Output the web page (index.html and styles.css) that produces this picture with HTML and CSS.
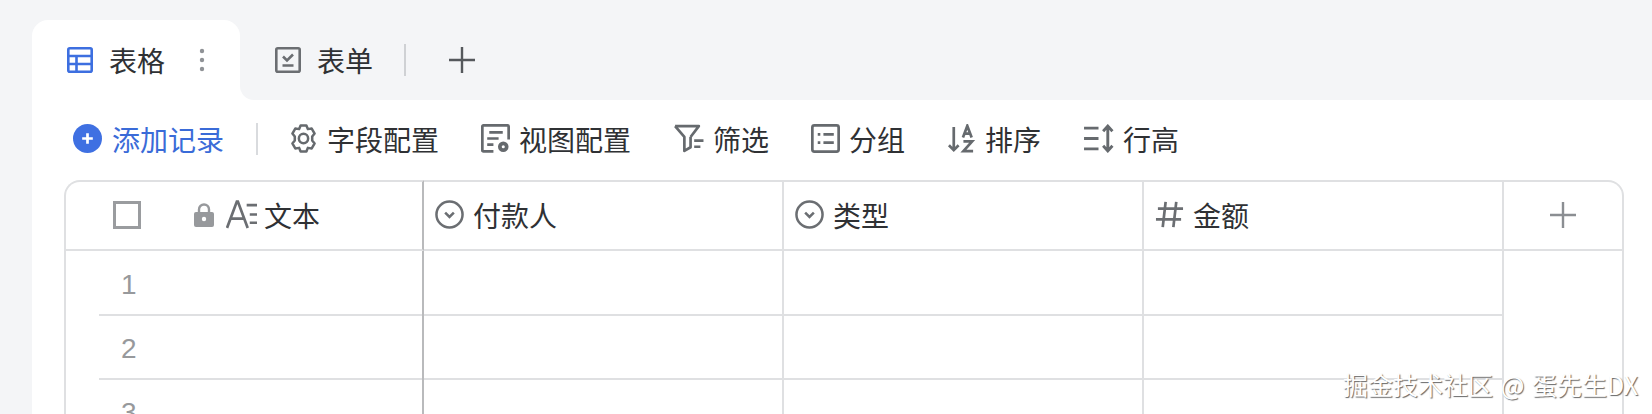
FILE: index.html
```html
<!DOCTYPE html>
<html lang="zh-CN">
<head>
    <meta charset="UTF-8">
    <meta name="viewport" content="width=device-width, initial-scale=1.0">
    <title>表格</title>
    <link rel="stylesheet" href="styles.css">
</head>
<body>

    <div class="view">
        <!-- tabs -->
        <div class="tabbar">
            <div class="tab-active">
                <svg class="icon" viewBox="0 0 26 26" fill="none" stroke="#3d6fe0" stroke-width="2.6"><rect x="1.3" y="1.3" width="23.4" height="23.4" rx="1.5"/><path d="M1.3 9h23.4M1.3 17h23.4M9.500 9v16"/></svg>
                <span class="tab-label">表格</span>
                <svg class="tab-dots" viewBox="0 0 6 24" fill="#8f9296"><circle cx="3" cy="3" r="2.2"/><circle cx="3" cy="12" r="2.2"/><circle cx="3" cy="21" r="2.2"/></svg>
            </div>
            <div class="tab-rest">
                <svg class="icon" viewBox="0 0 26 26" fill="none" stroke="#6b6e72" stroke-width="2.6"><rect x="1.3" y="1.3" width="23.4" height="23.4" rx="1.5"/><path d="M8 9.500l4 4 6-6M7.500 18.500h11"/></svg>
                <span class="tab-label">表单</span>
                <i class="tab-sep"></i>
                <svg class="icon" viewBox="0 0 26 26" fill="none" stroke="#55585c" stroke-width="2.4"><path d="M0 13h26M13 0v26"/></svg>
            </div>
        </div>

        <!-- toolbar -->
        <div class="toolbar">
            <div class="tool tool-add">
                <svg class="icon-lg" viewBox="0 0 30 30"><circle cx="15" cy="15" r="15" fill="#3f70e2"/><path d="M9.500 15h11M15 9.500v11" stroke="#fff" stroke-width="2.8" fill="none"/></svg>
                <span>添加记录</span>
            </div>
            <i class="tool-sep"></i>
            <div class="tool">
                <svg class="icon-lg" viewBox="0 0 28 30" fill="none" stroke="#666a6e" stroke-width="2.6"><path d="M11 1.500h6l1.500 3.800 4-.6 3 5.200-2.500 3.100v4l2.500 3.100-3 5.200-4-.6-1.500 3.800h-6l-1.500-3.800-4 .6-3-5.200 2.500-3.100v-4L2.500 9.900l3-5.200 4 .6z" stroke-linejoin="round"/><circle cx="14" cy="15" r="4.800"/></svg>
                <span>字段配置</span>
            </div>
            <div class="tool">
                <svg class="icon-lg" viewBox="0 0 28 28" fill="none" stroke="#666a6e" stroke-width="2.6"><path d="M12 26.500H2.300a1 1 0 0 1-1-1V2.300a1 1 0 0 1 1-1h23.400a1 1 0 0 1 1 1V15"/><path d="M8 8h13M6 14h11M6 20h6"/><circle cx="21.500" cy="22" r="3.300" stroke-width="3.600"/></svg>
                <span>视图配置</span>
            </div>
            <div class="tool">
                <svg class="icon-wide" viewBox="0 0 30 28" fill="none" stroke="#666a6e" stroke-width="2.6"><path d="M2 2h23l-8 10.500M2 2l9 10.500V26l6-3.500V12.500" stroke-linejoin="round"/><path d="M20.500 16h9M20.500 22h6"/></svg>
                <span>筛选</span>
            </div>
            <div class="tool">
                <svg class="icon-lg" viewBox="0 0 28 28" fill="none" stroke="#666a6e" stroke-width="2.6"><rect x="1.300" y="1.300" width="25.400" height="25.400" rx="2"/><path d="M6.500 10h2.500M12 10h10M6.500 18h2.500M12 18h10"/></svg>
                <span>分组</span>
            </div>
            <div class="tool">
                <svg class="icon-lg" viewBox="0 0 28 30" fill="none" stroke="#666a6e" stroke-width="2.800"><path d="M6 3v24M1 22l5 5 5-5"/><path d="M15.500 14l4.500-12 4.500 12M17 10h6M16 18h9l-9 10h10"/></svg>
                <span>排序</span>
            </div>
            <div class="tool">
                <svg class="icon-wide" viewBox="0 0 30 28" fill="none" stroke="#666a6e" stroke-width="2.800"><path d="M1 4h14M1 14h14M1 24h14"/><path d="M24 2v24M19.500 7l4.500-5 4.500 5M19.500 21l4.500 5 4.500-5"/></svg>
                <span>行高</span>
            </div>
        </div>

        <!-- table -->
        <div class="table">
            <div class="cell head head-text">
                <i class="checkbox"></i>
                <svg class="lock" viewBox="0 0 20 24"><path d="M5 10V6.500a5 5 0 0 1 10 0V10" fill="none" stroke="#97999c" stroke-width="2.400"/><path d="M2 9h16a2 2 0 0 1 2 2v11a2 2 0 0 1-2 2H2a2 2 0 0 1-2-2V11a2 2 0 0 1 2-2z" fill="#97999c"/><circle cx="10" cy="16" r="2.200" fill="#fff"/></svg>
                <svg class="icon-wide type-a" viewBox="0 0 30 28" fill="none" stroke="#6b6e72" stroke-width="2.600"><path d="M1 27L10.500 1.500h1L21 27M5 18h13"/><path d="M20 5h10M23 14h7M23 22h7"/></svg>
                <span>文本</span>
            </div>
            <div class="cell head">
                <svg class="icon-lg" viewBox="0 0 30 30" fill="none" stroke="#6b6e72" stroke-width="2.600"><circle cx="15" cy="15" r="13.500"/><path d="M10.500 13l4.500 4.500 4.500-4.500"/></svg>
                <span>付款人</span>
            </div>
            <div class="cell head">
                <svg class="icon-lg" viewBox="0 0 30 30" fill="none" stroke="#6b6e72" stroke-width="2.600"><circle cx="15" cy="15" r="13.500"/><path d="M10.500 13l4.500 4.500 4.500-4.500"/></svg>
                <span>类型</span>
            </div>
            <div class="cell head">
                <svg class="icon-lg" viewBox="0 0 30 28" fill="none" stroke="#6b6e72" stroke-width="2.800"><path d="M3 8h26M1 19h26M11 1L8 27M22 1l-3 26"/></svg>
                <span>金额</span>
            </div>
            <div class="cell head head-add">
                <svg class="icon" viewBox="0 0 26 26" fill="none" stroke="#8b8e92" stroke-width="2.400"><path d="M0 13h26M13 0v26"/></svg>
            </div>

            <div class="cell cell-text"><div class="row-num">1</div></div>
            <div class="cell"></div>
            <div class="cell"></div>
            <div class="cell"></div>
            <div class="cell-blank"></div>

            <div class="cell cell-text"><div class="row-num">2</div></div>
            <div class="cell"></div>
            <div class="cell"></div>
            <div class="cell"></div>

            <div class="cell cell-text"><div class="row-num">3</div></div>
            <div class="cell"></div>
            <div class="cell"></div>
            <div class="cell"></div>
        </div>
    </div>

    <div class="watermark">掘金技术社区 @ 蛋先生DX</div>

</body>
</html>
```

FILE: styles.css
```css
html, body {
    height: 100%;
}
body {
    margin: 0;
    padding: 20px 0 0 32px;
    box-sizing: border-box;
    position: relative;
    overflow: hidden;
    background: #f4f5f7;
    font-family: "Noto Sans CJK SC", "Liberation Sans", sans-serif;
    font-size: 28px;
    color: #2f3134;
}
i { display: block; }

.icon { width: 26px; height: 26px; flex: none; }
.icon-lg { width: 29px; height: 29px; flex: none; }
.icon-wide { width: 31px; height: 29px; flex: none; }

.view {
    height: 100%;
    display: flex;
    flex-direction: column;
}

/* tabs */
.tabbar {
    display: flex;
    height: 80px;
    flex: none;
    background: linear-gradient(transparent 60px, #fff 60px);
}
.tab-active {
    display: flex;
    align-items: center;
    width: 173px;
    padding-left: 35px;
    background: #fff;
    border-radius: 16px 16px 0 0;
}
.tab-label {
    margin-left: 16px;
    line-height: 36px;
}
.tab-dots {
    width: 6px;
    height: 24px;
    margin-left: 34px;
}
.tab-rest {
    flex: 1;
    display: flex;
    align-items: center;
    padding-left: 35px;
    background: #f4f5f7;
    border-bottom-left-radius: 14px;
}
.tab-sep {
    width: 2px;
    height: 32px;
    margin: 0 43px 0 31px;
    background: #cfd1d4;
}

/* toolbar */
.toolbar {
    display: flex;
    align-items: center;
    gap: 42px;
    height: 77px;
    padding: 0 0 3px 41px;
    flex: none;
    background: #fff;
}
.tool {
    display: flex;
    align-items: center;
    gap: 9px;
}
.tool-add {
    color: #3a6bd8;
    gap: 10px;
}
.tool-sep {
    width: 2px;
    height: 32px;
    margin: 0 -11px 0 -10px;
    background: #d9dbde;
}

/* table */
.table {
    flex: 1;
    display: grid;
    grid-template-columns: 360px 360px 360px 360px 120px;
    grid-template-rows: 71px 65px 64px 64px;
    padding-left: 32px;
    background: #fff;
}
.cell {
    display: flex;
    align-items: center;
    gap: 9px;
    padding-left: 11px;
    box-sizing: border-box;
    border-right: 2px solid #dfe0e2;
    border-bottom: 2px solid #dfe0e2;
}
.head {
    padding-bottom: 2px;
    border-top: 2px solid #dfe0e2;
}
.head-text {
    padding-left: 47px;
    gap: 0;
    border-left: 2px solid #dfe0e2;
    border-right-color: #b9babc;
    border-top-left-radius: 16px;
}
.head-add {
    justify-content: center;
    padding-left: 0;
    border-top-right-radius: 16px;
}
.checkbox {
    width: 28px;
    height: 28px;
    box-sizing: border-box;
    border: 3px solid #9a9c9f;
    margin-right: 53px;
}
.lock {
    width: 20px;
    height: 24px;
    margin-right: 12px;
    flex: none;
}
.type-a {
    margin-right: 7px;
}
.cell-text {
    padding-left: 33px;
    border-left: 2px solid #dfe0e2;
    border-right-color: #b9babc;
    border-bottom: none;
    align-items: stretch;
}
.row-num {
    flex: 1;
    display: flex;
    align-items: center;
    padding: 4px 0 0 22px;
    border-bottom: 2px solid #dfe0e2;
    font-family: "Liberation Sans", sans-serif;
    color: #97999c;
}
.cell-blank {
    grid-column: 5;
    grid-row: 2 / span 3;
    border-right: 2px solid #dfe0e2;
}

.watermark {
    position: absolute;
    right: 14px;
    bottom: 13px;
    color: #fff;
    font-size: 25px;
    line-height: 34px;
    word-spacing: 2px;
    white-space: nowrap;
    text-shadow: 1px 1px 1px #666;
}
```
